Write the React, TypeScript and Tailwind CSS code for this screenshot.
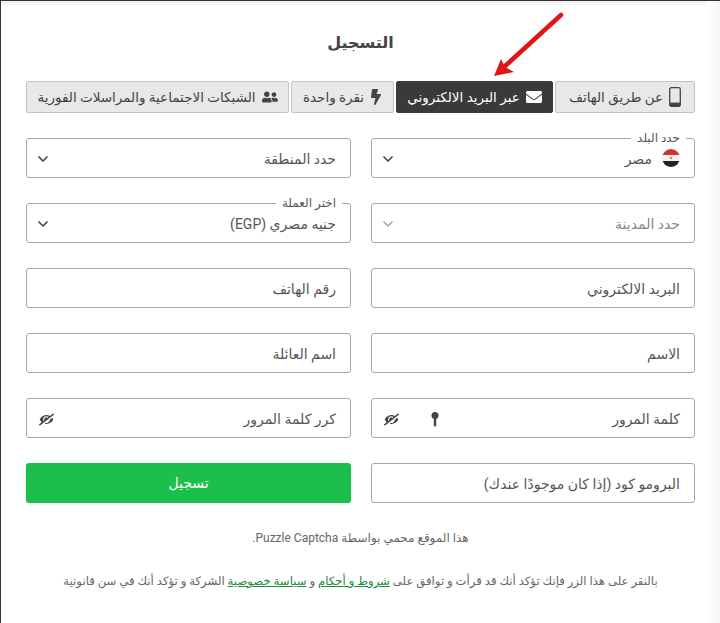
import { ChevronDown } from 'lucide-react'
import { FaBolt, FaEnvelope, FaEyeSlash, FaUserFriends } from 'react-icons/fa'

const font = "font-['Roboto','Noto_Sans','DejaVu_Sans',sans-serif]"

function Tab({ icon, label, active, className }: { icon: React.ReactNode; label: string; active?: boolean; className: string }) {
    return (
        <div
            className={`flex h-8 items-center justify-center gap-1.5 rounded-[2px] border text-[13.5px] ${className} ${
                active ? 'border-[#3a3a3a] bg-[#3a3a3a] text-white' : 'border-[#c4c4c4] bg-[#e8e8e8] text-[#444]'
            }`}
        >
            {icon}
            <span>{label}</span>
        </div>
    )
}

function Field({ legend, children }: { legend?: string; children: React.ReactNode }) {
    return (
        <div className="relative flex h-10 items-center rounded-[3px] border border-[#a8a8a8] bg-white pl-[8px] pr-[14px] pt-[2px] text-[14px] text-[#555]">
            {legend && (
                <span className="absolute -top-[8px] right-[8px] bg-white px-[6px] text-[12px] leading-[14px] text-[#555]">
                    {legend}
                </span>
            )}
            {children}
        </div>
    )
}

function Select({ legend, label, muted, flag }: { legend?: string; label: string; muted?: boolean; flag?: boolean }) {
    return (
        <Field legend={legend}>
            {flag && <EgyptFlag />}
            <span className={`flex-1 ${muted ? 'text-[#888]' : ''}`}>{label}</span>
            <ChevronDown className={`h-4 w-4 ${muted ? 'text-[#aaa]' : 'text-[#444]'}`} strokeWidth={2.5} />
        </Field>
    )
}

function EgyptFlag() {
    return (
        <svg viewBox="0 0 18 18" className="mb-[2px] ml-[10px] h-[18px] w-[18px] shrink-0">
            <clipPath id="flag-circle">
                <circle cx="9" cy="9" r="9" />
            </clipPath>
            <g clipPath="url(#flag-circle)">
                <rect width="18" height="6" fill="#d0342c" />
                <rect y="6" width="18" height="6" fill="#f4f4f4" />
                <rect y="12" width="18" height="6" fill="#222" />
                <circle cx="9" cy="9" r="1.3" fill="#c9a227" />
            </g>
        </svg>
    )
}

function PhoneIcon() {
    return (
        <svg viewBox="0 0 12 20" className="h-[20px] w-3 text-[#444]" fill="none">
            <rect x="0.7" y="0.7" width="10.6" height="18.6" rx="1.6" stroke="currentColor" strokeWidth="1.3" />
            <rect x="1" y="15.6" width="10" height="3.4" fill="currentColor" />
        </svg>
    )
}

function KeyIcon() {
    return (
        <svg viewBox="0 0 8 15" className="h-[15px] w-2 text-[#444]" fill="currentColor">
            <circle cx="4" cy="3.5" r="3.5" />
            <path d="M2.8 5h2.4v8.5L4 15 2.8 13.5z" />
        </svg>
    )
}

function EyeOff() {
    return <FaEyeSlash className="ml-[4px] h-[15px] w-[15px] -scale-x-100 text-[#444]" />
}

export default function App() {
    return (
        <div dir="rtl" className={`${font} relative h-[623px] w-[720px] overflow-hidden border-l border-t border-l-[#333] border-t-[#333] bg-white`}>
            {/* faint shadow along the top and right edge */}
            <div className="absolute inset-x-0 top-0 h-[6px] bg-gradient-to-b from-[#eeeeee] to-white" />
            <div className="absolute inset-y-0 right-0 w-[14px] bg-gradient-to-l from-[#f5f5f5] to-white" />

            <div className="relative mr-[25px] ml-[25px] w-[669px]">
                <h1 className="mt-[29px] h-[51px] text-center text-[16px] font-bold leading-[26px] text-[#444]">التسجيل</h1>

                <div className="flex gap-[2px]">
                    <Tab className="w-[140px]" icon={<PhoneIcon />} label="عن طريق الهاتف" />
                    <Tab className="w-[157px]" active icon={<FaEnvelope className="h-4 w-4" />} label="عبر البريد الالكتروني" />
                    <Tab className="w-[103px]" icon={<FaBolt className="h-4 w-3" />} label="نقرة واحدة" />
                    <Tab className="flex-1" icon={<FaUserFriends className="h-4 w-4" />} label="الشبكات الاجتماعية والمراسلات الفورية" />
                </div>

                <div className="mt-[25px] grid grid-cols-[324px_325px] gap-x-5 gap-y-[25px]">
                    <Select legend="حدد البلد" label="مصر" flag />
                    <Select label="حدد المنطقة" />
                    <Select label="حدد المدينة" muted />
                    <Select legend="اختر العملة" label="جنيه مصري (EGP)" />
                    <Field>البريد الالكتروني</Field>
                    <Field>رقم الهاتف</Field>
                    <Field>الاسم</Field>
                    <Field>اسم العائلة</Field>
                    <Field>
                        <span className="flex-1">كلمة المرور</span>
                        <span className="ml-[32px]"><KeyIcon /></span>
                        <EyeOff />
                    </Field>
                    <Field>
                        <span className="flex-1">كرر كلمة المرور</span>
                        <EyeOff />
                    </Field>
                    <Field>البرومو كود (إذا كان موجودًا عندك)</Field>
                    <button className="flex h-10 items-center justify-center rounded-[3px] bg-[#1cbf4b] text-[14px] text-white">تسجيل</button>
                </div>

                <p className="mt-[26px] text-center text-[12px] text-[#666]">هذا الموقع محمي بواسطة Puzzle Captcha.</p>
                <p className="mt-[26px] whitespace-nowrap text-center text-[11.7px] text-[#666]">
                    بالنقر على هذا الزر فإنك تؤكد أنك قد قرأت و توافق على{' '}
                    <span className="text-[#1c8a3a] underline">شروط و أحكام</span> و{' '}
                    <span className="text-[#1c8a3a] underline">سياسة خصوصية</span> الشركة و تؤكد أنك في سن قانونية
                </p>
            </div>

            {/* red arrow pointing at the email tab */}
            <svg className="absolute left-[488px] top-[10px] h-[70px] w-[80px]" viewBox="0 0 80 70" fill="none">
                <path d="M72 4 L15 56" stroke="#e01515" strokeWidth="4.5" strokeLinecap="round" />
                <path d="M5 65 L12 48 L16 56 L25 61 Z" fill="#e01515" />
            </svg>
        </div>
    )
}
